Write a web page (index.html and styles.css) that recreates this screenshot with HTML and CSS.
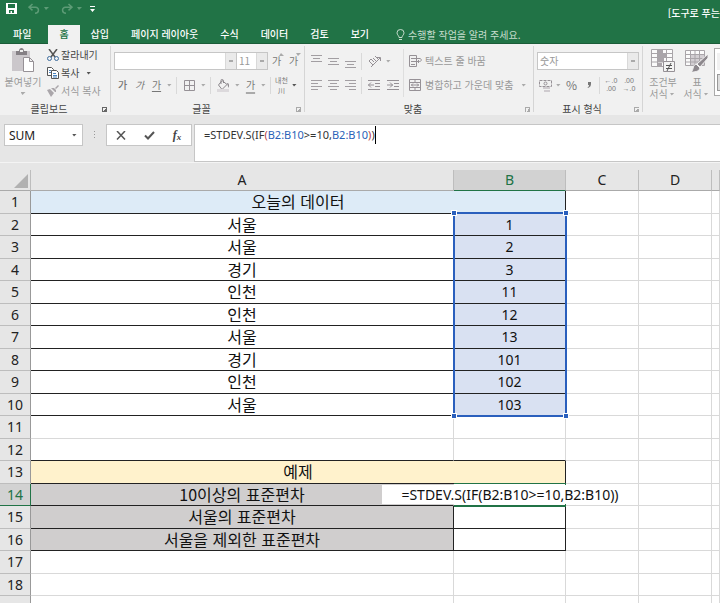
FILE: index.html
```html
<!DOCTYPE html>
<html lang="ko">
<head>
  <meta charset="UTF-8">
  <title>도구로 푸는</title>
  <link rel="stylesheet" href="styles.css">
</head>
<body>
  <header class="top">
    <div class="titlebar">
      <button class="quick" aria-label="저장"><svg width="12" height="12" viewBox="0 0 12 12"><path fill="#fff" fill-rule="evenodd" d="M0 0h11v11H0zM2 1v4h7V1zM3 7v3h1.500V8H6v2h2V7z"/></svg></button>
      <button class="quick dim" aria-label="실행 취소"><svg width="12" height="12" viewBox="0 0 12 12"><path fill="none" stroke="#5d9b76" stroke-width="1.500" d="M4.500 1L1 4.200l3.500 3.200M1 4.200h6.500c4 0 4 6-.5 6"/></svg></button>
      <i class="arrow dim"></i>
      <button class="quick dim" aria-label="다시 실행"><svg width="12" height="12" viewBox="0 0 12 12"><path fill="none" stroke="#5d9b76" stroke-width="1.500" d="M7.500 1L11 4.200 7.500 7.400M11 4.200H4.500c-4 0-4 6 .5 6"/></svg></button>
      <i class="arrow dim"></i>
      <button class="quick more" aria-label="빠른 실행 도구 모음"><svg width="5" height="6" viewBox="0 0 5 6"><path fill="#fff" d="M0 0h5v1H0zM0 3h5L2.500 6z"/></svg></button>
      <span class="title">[도구로 푸는</span>
    </div>
    <nav class="tabs">
      <a class="file" href="#">파일</a>
      <a class="current" href="#">홈</a>
      <a href="#">삽입</a>
      <a href="#">페이지 레이아웃</a>
      <a href="#">수식</a>
      <a href="#">데이터</a>
      <a href="#">검토</a>
      <a href="#">보기</a>
      <a class="tell" href="#"><svg width="9" height="12" viewBox="0 0 9 12"><path fill="none" stroke="#c5dccd" d="M3 8.500C3 6.500 1 6 1 3.800a3.500 3.300 0 0 1 7 0C8 6 6 6.500 6 8.500zM3 10.500h3"/></svg>수행할 작업을 알려 주세요.</a>
    </nav>
  </header>

  <div class="ribbon">
    <section class="group clipboard">
      <div class="bd">
        <button class="big paste">
          <svg width="24" height="25" viewBox="0 0 24 25"><path fill="#cbc7cb" d="M1 3h18v20H1z"/><path fill="#858085" d="M5 3h3c0-4 5-4 5 0h3v4H5z"/><path fill="#eee" d="M9 2h3v2H9z"/><path fill="#fff" stroke="#969196" d="M12.500 9.500h6l4 4v10h-10zM18.500 9.500v4h4"/></svg>
          <span>붙여넣기</span>
          <i class="arrow"></i>
        </button>
        <div class="stack">
          <button class="line on"><svg width="12" height="13" viewBox="0 0 12 13"><path fill="none" stroke="#555" stroke-width="1.500" d="M2 0l6 8M10 0L4 8"/><circle cx="2.500" cy="9.500" r="2" fill="none" stroke="#3d6c9e"/><circle cx="9.500" cy="9.500" r="2" fill="none" stroke="#3d6c9e"/></svg>잘라내기</button>
          <button class="line on"><svg width="12" height="12" viewBox="0 0 12 12"><path fill="#fff" stroke="#555" d="M.5.5h4l2 2v6h-6z"/><path stroke="#4a83bd" d="M2 3.500h2M2 5.500h3"/><path fill="#fff" stroke="#555" d="M4.500 3.500h5l2 2v6h-7z"/><path stroke="#4a83bd" d="M6 6.500h3M6 8.500h4M6 10h4"/></svg>복사<i class="arrow"></i></button>
          <button class="line"><svg width="12" height="12" viewBox="0 0 12 12"><path fill="#aaa6aa" d="M0 5l3-1 4 4-3 4zM5 3l2 0 2 2 0 2-1 0-4-4zM8 3l3-3 1 1-3 3z"/></svg>서식 복사</button>
        </div>
      </div>
      <h2>클립보드</h2>
      <button class="launch on" aria-label="클립보드 옵션"></button>
    </section>

    <section class="group font">
      <div class="bd rows">
        <div class="row">
          <span class="drop name"><select aria-label="글꼴"><option></option></select></span>
          <span class="drop size"><select aria-label="글꼴 크기"><option>11</option></select></span>
          <button class="tool grow">가<i class="arrow up"></i></button>
          <button class="tool shrink">가<i class="arrow"></i></button>
        </div>
        <div class="row">
          <button class="tool bold">가</button>
          <button class="tool italic">가</button>
          <button class="tool under">가</button>
          <i class="arrow"></i>
          <i class="sep"></i>
          <button class="tool wide" aria-label="테두리"><svg width="11" height="11" viewBox="0 0 11 11"><path fill="none" stroke="#969196" d="M.5.5h10v10H.5zM5.500 0v11M0 5.500h11"/></svg></button>
          <i class="arrow"></i>
          <i class="sep"></i>
          <button class="tool wide" aria-label="채우기 색"><svg width="13" height="13" viewBox="0 0 13 13"><path fill="none" stroke="#8a868a" d="M5 1.500l5 4-5 5-3.500-4.500zM4 5V1.500c0-2 2.500-1 2.500 0V4"/><path fill="#8a868a" d="M10 4c2 0 2.500 2 1.500 5z"/><path fill="#dcd9dc" d="M0 10h12v3H0z"/></svg></button>
          <i class="arrow"></i>
          <button class="tool color">가</button>
          <i class="arrow"></i>
          <i class="sep"></i>
          <button class="tool ruby"><span>내천</span><span>川</span></button>
          <i class="arrow dark"></i>
        </div>
      </div>
      <h2>글꼴</h2>
      <button class="launch" aria-label="글꼴 옵션"></button>
    </section>

    <section class="group align">
      <div class="bd">
        <div class="rows left">
          <div class="row">
            <button class="tool" aria-label="위쪽 맞춤"><svg width="11" height="13" viewBox="0 0 11 13"><path stroke="#a29ea2" d="M0 .5h11M2 3.500h7M0 6.500h11"/></svg></button>
            <button class="tool" aria-label="가운데 맞춤"><svg width="11" height="13" viewBox="0 0 11 13"><path stroke="#a29ea2" d="M0 3.500h11M2 6.500h7M0 9.500h11"/></svg></button>
            <button class="tool" aria-label="아래쪽 맞춤"><svg width="11" height="13" viewBox="0 0 11 13"><path stroke="#a29ea2" d="M0 6.500h11M2 9.500h7M0 12.500h11"/></svg></button>
            <i class="sep"></i>
            <button class="tool wide" aria-label="방향"><svg width="13" height="13" viewBox="0 0 13 13"><path fill="none" stroke="#969196" d="M3 12l9-9M9 2.500h3.500V6M1 6l4 4M1 6l2-2 3 3M5 3l3 3M7 1l3 3"/></svg></button>
            <i class="arrow"></i>
          </div>
          <div class="row">
            <button class="tool" aria-label="왼쪽 맞춤"><svg width="11" height="10" viewBox="0 0 11 10"><path stroke="#a29ea2" d="M0 .5h11M0 3.500h7M0 6.500h11M0 9.500h7"/></svg></button>
            <button class="tool" aria-label="가운데"><svg width="11" height="10" viewBox="0 0 11 10"><path stroke="#a29ea2" d="M0 .5h11M2 3.500h7M0 6.500h11M2 9.500h7"/></svg></button>
            <button class="tool" aria-label="오른쪽 맞춤"><svg width="11" height="10" viewBox="0 0 11 10"><path stroke="#a29ea2" d="M0 .5h11M4 3.500h7M0 6.500h11M4 9.500h7"/></svg></button>
            <i class="sep"></i>
            <button class="tool wide" aria-label="내어쓰기"><svg width="12" height="11" viewBox="0 0 12 11"><path fill="none" stroke="#969196" d="M0 .5h12M7 3.500h5M7 6.500h5M0 9.500h12M0 5h6M3 2.500L.5 5 3 7.500"/></svg></button>
            <button class="tool" aria-label="들여쓰기"><svg width="12" height="11" viewBox="0 0 12 11"><path fill="none" stroke="#969196" d="M0 .5h12M7 3.500h5M7 6.500h5M0 9.500h12M0 5h6M3 2.500L5.500 5 3 7.500"/></svg></button>
          </div>
        </div>
        <div class="rows right">
          <button class="line"><svg width="13" height="12" viewBox="0 0 13 12"><path fill="none" stroke="#969196" d="M.5.5h7v11h-7zM2 3.500h9M2 6.500h8.500c2.500 0 2-3 .5-3M2 9.500h4M10 5L8.500 6.500 10 8"/></svg>텍스트 줄 바꿈</button>
          <button class="line"><svg width="13" height="12" viewBox="0 0 13 12"><path fill="none" stroke="#969196" d="M.5.500h11v11H.5zM0 3.500h12M0 8.500h12M6 0v3.500M6 8.500V12M2 6h8M4 4.500L2.500 6 4 7.500M8 4.500L9.500 6 8 7.500"/></svg>병합하고 가운데 맞춤<i class="arrow"></i></button>
        </div>
      </div>
      <h2>맞춤</h2>
      <button class="launch" aria-label="맞춤 옵션"></button>
    </section>

    <section class="group number">
      <div class="bd rows">
        <div class="row">
          <span class="drop format"><select aria-label="표시 형식"><option>숫자</option></select></span>
        </div>
        <div class="row">
          <button class="tool" aria-label="회계 표시 형식"><svg width="13" height="13" viewBox="0 0 13 13"><path fill="none" stroke="#969196" stroke-dasharray="3 1" d="M.5 1.500h12v6H.5z"/><circle cx="6.500" cy="4.500" r="1.500" fill="none" stroke="#969196"/><path fill="#cfcbcf" d="M4 8h7v2H4zM5 11h6v2H5z"/></svg></button>
          <i class="arrow"></i>
          <button class="tool sign">%</button>
          <button class="tool" aria-label="쉼표 스타일"><svg width="4" height="6" viewBox="0 0 4 6"><path fill="#777" d="M1 0h3v2c0 2-1 3-3 4l-.5-.5C1.500 5 2 4 2 3H1z"/></svg></button>
          <i class="sep"></i>
          <button class="tool dec"><span>←.0</span><span>.00</span></button>
          <button class="tool dec"><span>.00</span><span>→.0</span></button>
        </div>
      </div>
      <h2>표시 형식</h2>
      <button class="launch" aria-label="표시 형식 옵션"></button>
    </section>

    <section class="group styles">
      <div class="bd">
        <button class="big">
          <svg width="24" height="25" viewBox="0 0 24 25"><path fill="#fbfbfb" stroke="#a9a5a9" d="M.5 1.500h21v17H.5zM0 5.500h22M0 9.500h22M0 14h22M6.500 1v18M15.500 1v18"/><path fill="#aaa5aa" d="M7 2h5v3H7zM7 6h8v3H7zM7 10h6v4H7zM7 15h4v3H7z"/><path fill="#f4f4f4" stroke="#969196" d="M12.500 13.500h11v10h-11z"/><path stroke="#555" d="M15 17.500h6M15 20.500h6M20 15l-4 8"/></svg>
          <span>조건부</span>
          <span>서식<i class="arrow"></i></span>
        </button>
        <button class="big">
          <svg width="24" height="25" viewBox="0 0 24 25"><path fill="#fbfbfb" stroke="#a9a5a9" d="M.5 2.500h19v15H.5z"/><path fill="#d3cfd3" d="M5 7h14v10H5z"/><path stroke="#a9a5a9" d="M0 6.500h20M0 10.500h20M0 14h20M5.500 2v16M10 2v16M14.500 2v16"/><path fill="#8d888d" stroke="#f1f1f1" d="M23 6v4l-8 9-3-3zM11 16l4 4c-1 4-6 4-9 4 3-2 1-6 5-8z"/></svg>
          <span>표</span>
          <span>서식<i class="arrow"></i></span>
        </button>
        <div class="gallery"><span></span><span class="on"></span></div>
      </div>
    </section>
  </div>

  <div class="formula">
    <div class="namebox"><input aria-label="이름 상자" value="SUM"><i class="arrow"></i></div>
    <i class="dots"></i>
    <div class="confirm">
      <button aria-label="취소"><svg width="10" height="9" viewBox="0 0 10 9"><path stroke="#555" stroke-width="1.500" d="M1 0l8 8.500M9 0L1 8.500"/></svg></button>
      <button aria-label="입력"><svg width="11" height="9" viewBox="0 0 11 9"><path fill="none" stroke="#555" stroke-width="2" d="M1 4.500l3 3L10 1"/></svg></button>
      <button class="fx" aria-label="함수 삽입">f<small>x</small></button>
    </div>
    <div class="entry" role="textbox" aria-label="수식" contenteditable="true">=STDEV.S(IF<span class="paren">(</span><span class="ref">B2:B10</span>&gt;=10,<span class="ref">B2:B10</span><span class="paren">)</span>)<i class="caret"></i></div>
  </div>

  <div class="sheet">
    <table>
      <colgroup><col class="n"><col><col class="b"><col class="c"><col class="c"><col class="e"></colgroup>
      <thead>
        <tr><th class="corner"><i></i></th><th>A</th><th class="current">B</th><th>C</th><th>D</th><th></th></tr>
      </thead>
      <tbody>
        <tr><th>1</th><td class="ln rt head" colspan="2">오늘의 데이터</td><td></td><td></td><td></td></tr>
        <tr><th>2</th><td class="ln">서울</td><td class="ln range num">1<div class="frame"><i></i><i></i><i></i><i></i></div></td><td></td><td></td><td></td></tr>
        <tr><th>3</th><td class="ln">서울</td><td class="ln range num">2</td><td></td><td></td><td></td></tr>
        <tr><th>4</th><td class="ln">경기</td><td class="ln range num">3</td><td></td><td></td><td></td></tr>
        <tr><th>5</th><td class="ln">인천</td><td class="ln range num">11</td><td></td><td></td><td></td></tr>
        <tr><th>6</th><td class="ln">인천</td><td class="ln range num">12</td><td></td><td></td><td></td></tr>
        <tr><th>7</th><td class="ln">서울</td><td class="ln range num">13</td><td></td><td></td><td></td></tr>
        <tr><th>8</th><td class="ln">경기</td><td class="ln range num">101</td><td></td><td></td><td></td></tr>
        <tr><th>9</th><td class="ln">인천</td><td class="ln range num">102</td><td></td><td></td><td></td></tr>
        <tr><th>10</th><td class="ln">서울</td><td class="ln range num">103</td><td></td><td></td><td></td></tr>
        <tr><th>11</th><td></td><td></td><td></td><td></td><td></td></tr>
        <tr><th>12</th><td class="ln"></td><td class="ln"></td><td></td><td></td><td></td></tr>
        <tr><th>13</th><td class="ln rt example" colspan="2">예제</td><td></td><td></td><td></td></tr>
        <tr><th class="current">14</th><td class="ln gray">10이상의 표준편차</td><td class="edit"><input aria-label="B14" value="=STDEV.S(IF(B2:B10&gt;=10,B2:B10))"></td><td></td><td></td><td></td></tr>
        <tr><th>15</th><td class="ln rt gray">서울의 표준편차</td><td class="ln rt"></td><td></td><td></td><td></td></tr>
        <tr><th>16</th><td class="ln rt gray">서울을 제외한 표준편차</td><td class="ln rt"></td><td></td><td></td><td></td></tr>
        <tr><th>17</th><td></td><td></td><td></td><td></td><td></td></tr>
        <tr><th>18</th><td></td><td></td><td></td><td></td><td></td></tr>
        <tr><th></th><td></td><td></td><td></td><td></td><td></td></tr>
      </tbody>
    </table>
  </div>
</body>
</html>
```

FILE: styles.css
```css
* {
  box-sizing: border-box;
}

body {
  margin: 0;
  height: 100vh;
  overflow: hidden;
  background-color: #e6e6e6;
  font: 10px/12px "Noto Sans CJK KR", sans-serif;
  color: #444;
}

button,
input,
select {
  margin: 0;
  padding: 0;
  border: 0;
  background: none;
  font: inherit;
  color: inherit;
}

a {
  text-decoration: none;
  color: inherit;
}

svg {
  display: block;
  flex: none;
}

/* 화살표 */
.arrow {
  flex: none;
  width: 9px;
  height: 3px;
  background: linear-gradient(#aaa, #aaa) no-repeat center;
  background-size: 5px 3px;
  clip-path: polygon(2px 0, 7px 0, 4px 3px);
}

.arrow.dim {
  background-image: linear-gradient(#5d9b76, #5d9b76);
}

.arrow.up {
  clip-path: polygon(2px 3px, 7px 3px, 4px 0);
}

.arrow.dark,
.line.on .arrow,
.namebox .arrow {
  background-image: linear-gradient(#555, #555);
}

/* 제목 표시줄 */
.top {
  height: 44px;
  background-color: #217346;
  border-bottom: 1px solid #1a5c38;
  color: #fff;
}

.titlebar {
  display: flex;
  align-items: center;
  height: 25px;
  padding-left: 6px;
  overflow: hidden;
  white-space: nowrap;
}

.quick,
.titlebar .arrow {
  margin-bottom: 8px;
}

.titlebar .arrow {
  margin-left: 2px;
}

.quick.dim {
  margin-left: 10px;
}

.quick.more {
  margin-left: 6px;
}

.title {
  margin-left: auto;
  font-weight: 500;
}

.tabs {
  display: flex;
  height: 19px;
  padding-left: 2px;
  white-space: nowrap;
  font-weight: 500;
}

.tabs a {
  padding: 0 11px;
  line-height: 18px;
}

.tabs .file {
  margin-right: 6px;
}

.tabs a.current {
  background-color: #f1f1f1;
  color: #217346;
}

.tabs a.tell {
  display: flex;
  align-items: center;
  gap: 3px;
  padding-left: 16px;
  font-weight: 400;
  color: #c5dccd;
}

/* 리본 */
.ribbon {
  display: flex;
  height: 71px;
  background-color: #f1f1f1;
  overflow: hidden;
  white-space: nowrap;
  color: #999;
}

.group {
  position: relative;
  flex: none;
  display: flex;
  flex-direction: column;
  justify-content: space-between;
  margin-top: 2px;
  padding-left: 3px;
}

.group::after {
  content: "";
  position: absolute;
  right: 0;
  top: 0;
  bottom: 3px;
  width: 1px;
  background-color: #d5d5d5;
}

.group h2 {
  margin: 0;
  padding-right: 16px;
  font-size: 10px;
  line-height: 12px;
  font-weight: 400;
  text-align: center;
  color: #444;
}

.clipboard {
  width: 111px;
}

.font {
  width: 194px;
}

.align {
  width: 229px;
}

.number {
  width: 109px;
}

.styles {
  width: 100px;
}

.launch {
  position: absolute;
  right: 4px;
  bottom: 3px;
  width: 5px;
  height: 5px;
  border: solid #aaa;
  border-width: 1px 0 0 1px;
  background: linear-gradient(135deg, transparent 50%, #aaa 50%);
}

.launch.on {
  border-color: #666;
  background: linear-gradient(135deg, transparent 50%, #666 50%);
}

.bd {
  display: flex;
}

.rows {
  flex-direction: column;
  padding-top: 3px;
}

.row {
  display: flex;
  align-items: center;
  height: 24px;
}

.big {
  display: flex;
  flex-direction: column;
  align-items: center;
  width: 34px;
  padding-top: 2px;
}

.big svg {
  margin-bottom: 3px;
}

.big span {
  display: flex;
  align-items: center;
}

.big.paste {
  width: 40px;
}

.paste .arrow {
  margin-top: 4px;
}

.stack {
  padding-left: 4px;
}

.line {
  display: flex;
  align-items: center;
  gap: 3px;
  height: 18px;
}

.line.on {
  color: #444;
}

.stack .line {
  gap: 2px;
}

.line .arrow {
  margin-left: 3px;
}

.drop {
  position: relative;
  display: block;
  height: 18px;
  border: 1px solid #c6c6c6;
  background-color: #fff;
}

.drop::after {
  content: "";
  position: absolute;
  right: 0;
  top: 0;
  width: 10px;
  height: 16px;
  border-left: 1px solid #d9d9d9;
  background: linear-gradient(#aaa, #aaa) no-repeat center / 4px 2px #eaeaea;
  pointer-events: none;
}

.drop select {
  display: block;
  width: 100%;
  height: 16px;
  padding-left: 2px;
  appearance: none;
}

.drop.name {
  width: 123px;
}

.drop.size {
  width: 31px;
  border-left: 0;
}

.drop.format {
  width: 102px;
}

.tool {
  position: relative;
  flex: none;
  display: flex;
  align-items: center;
  justify-content: center;
  width: 17px;
  height: 20px;
  color: #777;
}

.tool.wide {
  width: 20px;
}

.tool.bold {
  font-weight: 500;
}

.tool.italic {
  font-style: italic;
}

.tool.under {
  text-decoration: underline;
  text-underline-offset: 2px;
}

.tool.color {
  text-decoration: underline 2px #aaa;
  text-underline-offset: 3px;
}

.grow .arrow,
.shrink .arrow {
  position: absolute;
  right: -1px;
  top: 2px;
}

.tool.ruby {
  flex-direction: column;
  font-size: 7px;
  line-height: 10px;
}

.tool.sign {
  font-size: 12px;
}

.tool.dec {
  flex-direction: column;
  width: 18px;
  font-family: "Liberation Sans", sans-serif;
  font-size: 7px;
  line-height: 8px;
}

.sep {
  width: 1px;
  height: 17px;
  margin: 0 2px;
  background-color: #d9d9d9;
}

.align .left {
  width: 95px;
}

.align .right {
  margin: 3px 0 4px;
  padding: 0 0 0 5px;
  border-left: 1px solid #dedede;
}

.align .right .line {
  height: 24px;
}

.gallery {
  width: 24px;
  height: 48px;
  margin: 2px 0 0;
  border: 1px solid #aaa;
  background-color: #fff;
  overflow: hidden;
}

.gallery span {
  display: block;
  height: 17px;
  margin: 4px 2px;
  background-color: #f1f1f1;
}

.gallery .on {
  border: 1px solid #999;
  background-color: #ddd;
}

/* 수식 입력줄 */
.formula {
  display: flex;
  align-items: flex-start;
  padding: 9px 0 0 4px;
  border-bottom: 1px solid #f4f4f4;
  font-family: "Noto Sans", "Noto Sans CJK KR", sans-serif;
  font-size: 12px;
}

.namebox,
.confirm {
  display: flex;
  align-items: center;
  height: 22px;
  border: 1px solid #c6c6c6;
  background-color: #fff;
}

.namebox {
  width: 79px;
}

.namebox input {
  flex: 1;
  min-width: 0;
  padding-left: 4px;
  color: #222;
}

.namebox .arrow {
  margin-right: 3px;
}

.dots {
  width: 1px;
  height: 8px;
  margin: 7px 11px;
  background: repeating-linear-gradient(#999 0 1px, transparent 1px 3px);
}

.confirm {
  width: 86px;
}

.confirm button {
  flex: 1;
  display: flex;
  align-items: center;
  justify-content: center;
}

.confirm .fx {
  font: italic 700 12px "Liberation Serif", serif;
}

.fx small {
  font-size: 9px;
  margin-top: 3px;
}

.entry {
  flex: 1;
  display: flex;
  height: 38px;
  margin-left: 2px;
  padding: 1px 9px;
  border: 1px solid #c6c6c6;
  border-right: 0;
  background-color: #fff;
  font-size: 11px;
  line-height: 18px;
  white-space: nowrap;
  color: #333;
}

.entry .paren {
  color: #b5414b;
}

.entry .ref {
  color: #2a62b8;
}

.caret {
  width: 1px;
  height: 18px;
  background-color: #000;
}

/* 시트 */
.sheet {
  padding-top: 7px;
}

table {
  width: 100%;
  table-layout: fixed;
  border-collapse: separate;
  border-spacing: 0;
  background-color: #fff;
  font-size: 16px;
  line-height: 18px;
  color: #111;
}

.n {
  width: 31px;
}

.b {
  width: 112px;
}

.c {
  width: 73px;
}

.e {
  width: 8px;
}

th,
td {
  position: relative;
  height: 23px;
  padding: 0;
  border: solid #d9d9d9;
  border-width: 0 1px 1px 0;
  text-align: center;
  white-space: nowrap;
}

td {
  padding-bottom: 2px;
}

tbody tr:nth-child(even) > * {
  height: 22px;
}

th {
  border-color: #bdbdbd;
  background-color: #e6e6e6;
  font: 14px/20px "Noto Sans", sans-serif;
  color: #222;
}

tbody th {
  border-right-color: #999;
}

thead th {
  height: 21px;
  border-bottom-color: #aaa;
}

th.current {
  background-color: #d2d2d2;
  border-color: #217346;
  color: #217346;
}

thead th.current {
  border-right-color: #bdbdbd;
}

.corner i {
  position: absolute;
  right: 2px;
  bottom: 2px;
  border: solid transparent;
  border-width: 0 0 14px 14px;
  border-bottom-color: #b1b1b1;
}

.ln {
  border-bottom-color: #222;
}

.rt {
  border-right-color: #222;
}

.head {
  background-color: #ddebf7;
}

.example {
  background-color: #fff2cc;
}

.gray {
  background-color: #d0cece;
}

.range {
  background-color: #d9e1f2;
}

.num {
  padding: 0;
  font: 14px/20px "Noto Sans", sans-serif;
}

/* B2:B10 선택 범위 */
.frame {
  position: absolute;
  left: -1px;
  right: -2px;
  top: -2px;
  height: 205px;
  border: 2px solid #2a5fbd;
  z-index: 1;
}

.frame i {
  position: absolute;
  width: 4px;
  height: 4px;
  background-color: #2a5fbd;
  outline: 1px solid #fff;
}

.frame i:nth-child(odd) {
  left: -3px;
}

.frame i:nth-child(even) {
  right: -3px;
}

.frame i:nth-child(-n+2) {
  top: -3px;
}

.frame i:nth-child(n+3) {
  bottom: -3px;
}

/* B14 편집 */
.edit {
  border-color: #217346;
  box-shadow: 0 -1px #217346, 0 1px #217346;
  z-index: 1;
}

.edit input {
  position: absolute;
  left: -72px;
  top: 1px;
  width: 256px;
  height: 19px;
  background-color: #fff;
  font: 14px/19px "Noto Sans", sans-serif;
  text-align: center;
  color: #111;
}
```
